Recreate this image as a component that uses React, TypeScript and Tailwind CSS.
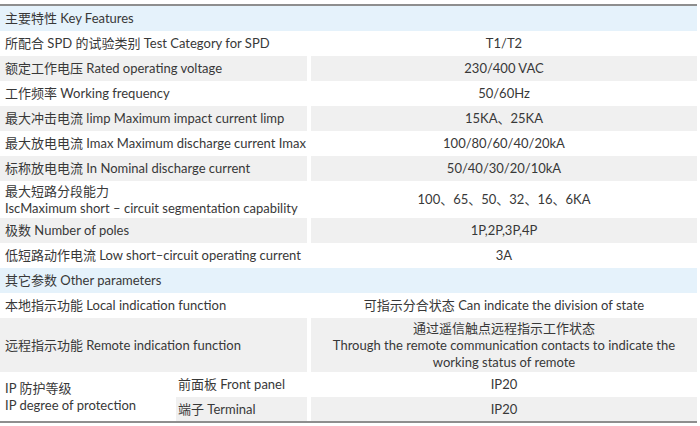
type Row =
  | { kind: 'head'; label: string }
  | { kind: 'row'; label: string; value: string; gray?: boolean; h?: string; twoLine?: string };

const rows: Row[] = [
  { kind: 'head', label: '主要特性 Key Features' },
  { kind: 'row', label: '所配合 SPD 的试验类别 Test Category for SPD', value: 'T1/T2' },
  { kind: 'row', label: '额定工作电压 Rated operating voltage', value: '230/400 VAC', gray: true },
  { kind: 'row', label: '工作频率 Working frequency', value: '50/60Hz' },
  { kind: 'row', label: '最大冲击电流 limp Maximum impact current limp', value: '15KA、25KA', gray: true },
  { kind: 'row', label: '最大放电电流 Imax Maximum discharge current Imax', value: '100/80/60/40/20kA' },
  { kind: 'row', label: '标称放电电流 In  Nominal discharge current', value: '50/40/30/20/10kA', gray: true },
  {
    kind: 'row',
    label: '最大短路分段能力',
    twoLine: 'IscMaximum short – circuit segmentation capability',
    value: '100、65、50、32、16、6KA',
    h: 'h-[37px]',
  },
  { kind: 'row', label: '极数 Number of poles', value: '1P,2P,3P,4P', gray: true },
  { kind: 'row', label: '低短路动作电流 Low short–circuit operating current', value: '3A' },
  { kind: 'head', label: '其它参数 Other parameters' },
  { kind: 'row', label: '本地指示功能 Local indication function', value: '可指示分合状态 Can indicate the division of state' },
];

export default function App() {
  return (
    <div
      className="w-[700px] h-[426px] bg-white pt-[4px] text-[13px] text-[#383838] leading-[17px] whitespace-nowrap"
      style={{ fontFamily: 'Lato, "Noto Sans CJK SC", sans-serif' }}
    >
      <div className="w-[697px] border-t-2 border-b-2 border-[#8e8e8e] grid grid-cols-[172px_131px_386px] gap-x-[4px]">
        {rows.map((r, i) =>
          r.kind === 'head' ? (
            <div key={i} className="col-span-3 h-[25px] bg-[#e5f2fb] flex items-center pl-[5px]">
              {r.label}
            </div>
          ) : (
            <div key={i} className="contents">
              <div
                className={`col-span-2 ${r.h ?? 'h-[25px]'} flex flex-col justify-center pl-[5px] ${r.gray ? 'bg-[#f0f0f0]' : ''}`}
              >
                <span>{r.label}</span>
                {r.twoLine && <span>{r.twoLine}</span>}
              </div>
              <div className={`${r.h ?? 'h-[25px]'} flex items-center justify-center ${r.gray ? 'bg-[#f0f0f0]' : ''}`}>
                {r.value}
              </div>
            </div>
          )
        )}

        {/* remote indication */}
        <div className="col-span-2 h-[54px] bg-[#f0f0f0] flex items-center pl-[5px]">远程指示功能 Remote indication function</div>
        <div className="h-[54px] bg-[#f0f0f0] flex flex-col items-center justify-center text-center">
          <span>通过遥信触点远程指示工作状态</span>
          <span>Through the remote communication contacts to indicate the</span>
          <span>working status of remote</span>
        </div>

        {/* IP protection */}
        <div className="row-span-2 flex flex-col justify-center pl-[5px]">
          <span>IP 防护等级</span>
          <span>IP degree of protection</span>
        </div>
        <div className="h-[25px] flex items-center pl-[2px]">前面板 Front panel</div>
        <div className="h-[25px] flex items-center justify-center">IP20</div>
        <div className="h-[24px] bg-[#f0f0f0] flex items-center pl-[2px]">端子 Terminal</div>
        <div className="h-[24px] bg-[#f0f0f0] flex items-center justify-center">IP20</div>
      </div>
    </div>
  );
}
